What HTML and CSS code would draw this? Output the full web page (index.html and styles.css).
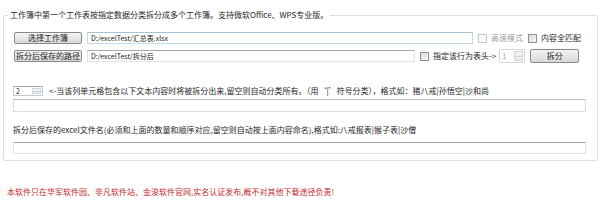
FILE: index.html
```html
<!DOCTYPE html>
<html lang="zh-CN">

<head>
    <meta charset="UTF-8">
    <meta name="viewport" content="width=device-width, initial-scale=1.0">
    <title>拆分工作簿</title>
    <link rel="stylesheet" href="styles.css">
</head>

<body>
    <fieldset class="group">
        <legend>工作簿中第一个工作表按指定数据分类拆分成多个工作簿。支持微软Office、WPS专业版。</legend>

        <div class="row row-top">
            <button class="btn btn-path">选择工作簿</button>
            <div class="field field-src focus">D:/excelTest/汇总表.xlsx</div>
            <label class="check disabled"><span class="box"></span>高速模式</label>
            <label class="check"><span class="box"></span>内容全匹配</label>
        </div>

        <div class="row row-second">
            <button class="btn btn-path">拆分后保存的路径</button>
            <div class="field field-dst">D:/excelTest/拆分后</div>
            <label class="check"><span class="box"></span>指定该行为表头-&gt;</label>
            <div class="spin spin-head disabled"><span class="num">1</span><span class="arrows"></span></div>
            <button class="btn btn-split">拆分</button>
        </div>

        <div class="row row-col">
            <div class="spin spin-col"><span class="num">2</span><span class="arrows"></span></div>
            <span class="hint">&lt;-当该列单元格包含以下文本内容时将被拆分出来,留空则自动分类所有。（用‘|’符号分类），格式如：猪八戒|孙悟空|沙和尚</span>
        </div>
        <div class="field field-wide field-keys"></div>

        <div class="label">拆分后保存的excel文件名(必须和上面的数量和顺序对应,留空则自动按上面内容命名),格式如:八戒报表|猴子表|沙僧</div>
        <div class="field field-wide field-names"></div>
    </fieldset>

    <p class="notice">本软件只在华军软件园、非凡软件站、金浚软件官网,实名认证发布,概不对其他下载途径负责!</p>
</body>

</html>
```

FILE: styles.css
```css
body {
    margin: 0;
    background-color: #ffffff;
    color: #1e1e1e;
    font-family: "Noto Sans CJK SC", "Liberation Sans", sans-serif;
    font-size: 8px;
    line-height: 10px;
}

.group {
    margin: 10px 3px 0 3px;
    padding: 2px 11px 6px 9px;
    border: 1px solid #dedede;
    border-radius: 2px;
}

.group legend {
    margin-left: -5px;
    padding: 0 2px;
    line-height: 10px;
}

.row {
    display: flex;
    align-items: center;
}

.row-top {
    height: 12px;
    margin-top: 10px;
}

.row-second {
    height: 14px;
    margin-top: 5px;
}

.row-col {
    height: 10px;
    margin-top: 23px;
}

.btn {
    font-family: inherit;
    font-size: 8px;
    line-height: 10px;
    color: #1e1e1e;
    padding: 0;
    border: 1px solid #8a8a8a;
    border-radius: 2px;
    background: linear-gradient(#f4f4f4, #e6e6e6 50%, #d8d8d8);
    cursor: pointer;
}

.btn-path {
    width: 68px;
    height: 12px;
    margin-left: 1px;
}

.btn-split {
    width: 49px;
    height: 14px;
    margin-left: 5px;
}

.field {
    height: 12px;
    box-sizing: border-box;
    border: 1px solid #e2e3ea;
    border-top-color: #a9a9a9;
    padding: 0 3px;
    font-size: 7px;
    line-height: 10px;
    color: #222222;
    background-color: #ffffff;
}

.field.focus {
    border-color: #c5dbec;
    border-top-color: #a6c2d6;
}

.field-src {
    width: 386px;
    margin-left: 5px;
}

.field-dst {
    width: 328px;
    margin-left: 5px;
}

.field-wide {
    width: 573px;
}

.field-keys {
    height: 13px;
    margin-top: 3px;
    border-color: #d5dce3;
    border-top-color: #b9c3cc;
}

.field-names {
    margin-top: 7px;
}

.check {
    display: flex;
    align-items: center;
    margin-left: 5px;
    white-space: nowrap;
}

.check .box {
    width: 7px;
    height: 7px;
    margin-right: 4px;
    border: 1px solid #8e8f8f;
    background: linear-gradient(135deg, #dcdcdc, #f6f6f6);
}

.check.disabled {
    color: #a0a0a0;
}

.check.disabled .box {
    border-color: #c6c6c6;
    background: #fafafa;
}

.spin {
    display: flex;
    box-sizing: border-box;
    border: 1px solid #c4c9cf;
    border-top-color: #a9a9a9;
    background-color: #ffffff;
}

.spin .num {
    flex: 1;
    padding-left: 2px;
    font-size: 7px;
    line-height: 8px;
}

.spin .arrows {
    width: 7px;
    margin: 1px;
    border: 1px solid #cfd6dd;
    background:
        linear-gradient(#cfd6dd, #cfd6dd) center / 100% 1px no-repeat,
        linear-gradient(#f5f7f9, #e3e8ec);
}

.spin-head {
    width: 26px;
    height: 14px;
    margin-left: 3px;
}

.spin-head .num {
    line-height: 12px;
}

.spin.disabled {
    color: #a0a0a0;
    border-color: #d8d8d8;
}

.spin-col {
    width: 30px;
    height: 10px;
}

.hint {
    margin-left: 6px;
    white-space: nowrap;
}

.label {
    margin-top: 13px;
    white-space: nowrap;
}

.notice {
    margin: 26px 0 0 7px;
    color: #c3272b;
    white-space: nowrap;
}
```
